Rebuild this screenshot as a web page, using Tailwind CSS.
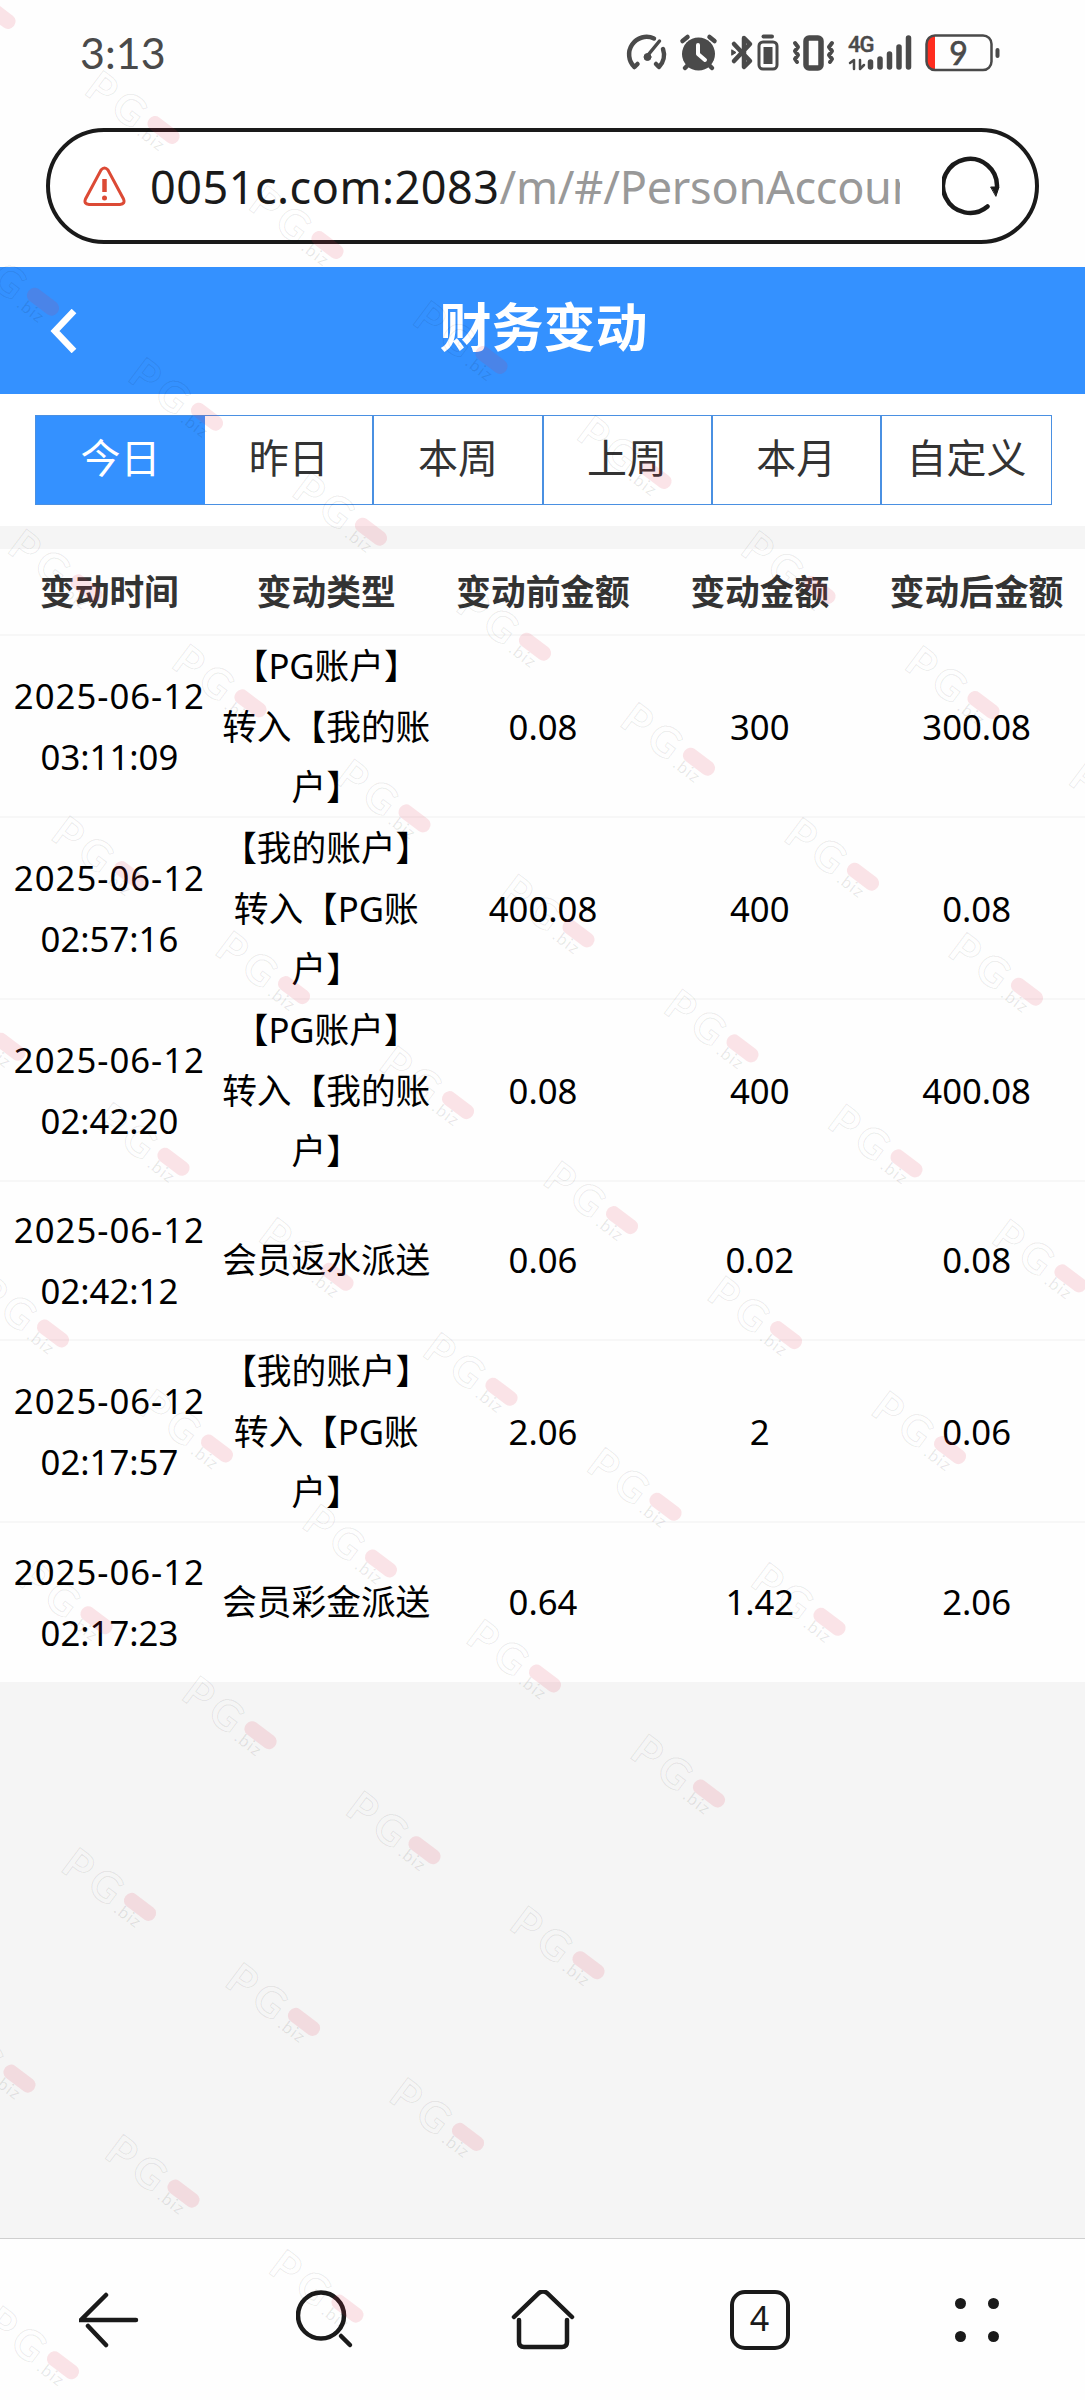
<!DOCTYPE html>
<html lang="zh-CN">
<head>
<meta charset="utf-8">
<title>财务变动</title>
<script src="https://cdn.jsdelivr.net/npm/@tailwindcss/browser@4"></script>
</head>
<body class="bg-[#f5f5f5]">
<div class="relative flex flex-col w-[1085px] h-[2400px] overflow-hidden bg-[#f5f5f5] font-['Noto_Sans','Noto_Sans_CJK_SC',sans-serif] text-black">

  <!-- status bar -->
  <div class="h-[108px] shrink-0 bg-[#fefefe] flex items-center justify-between pl-20 pr-[84px]">
    <span class="text-[43px] leading-none font-['Lato','Noto_Sans',sans-serif] text-[#4a4a4a] w-24 whitespace-nowrap pb-1">3:13</span>
    <svg class="w-[376px] h-[60px]" viewBox="625 24 376 60" fill="none" stroke="#4a4a4a" stroke-width="4.5" stroke-linecap="round" stroke-linejoin="round">
      <path d="M654 38.500A17.500 17.500 0 0 0 634.500 67l3-3M663 49a17.500 17.500 0 0 1-4 18l-3-3"/>
      <path d="M659.500 41L646 57.500" stroke-width="3.500"/><circle cx="647.500" cy="57" r="3.500" fill="#4a4a4a" stroke-width="1"/>
      <circle cx="698.500" cy="54" r="16.500" fill="#4a4a4a" stroke="none"/>
      <path d="M682.500 41l5-4M714.500 41l-5-4M687 66l-2 2M710 66l2 2" stroke-width="4.500"/>
      <path d="M698 45v9l7 6" stroke="#fefefe" stroke-width="4"/>
      <path d="M734 44l16 17-6 6V38l6 6-16 17" stroke-width="4.500"/><path d="M732 50l4 2.500-4 2.500z" stroke-width="1" fill="#4a4a4a"/>
      <rect x="759" y="42" width="18" height="27" rx="4" stroke-width="3"/><path d="M763.500 36.500h8.500" stroke-width="4"/><path d="M763.500 47h9v17h-9z" fill="#4a4a4a" stroke="none"/>
      <rect x="806" y="38" width="15" height="30" rx="3" stroke-width="5.500"/>
      <path d="M795 43l3 4-3 4 3 4-3 4 2 3M832 43l-3 4 3 4-3 4 3 4-2 3" stroke-width="4"/>
      <path d="M870.500 62v5M880 59v8M889.500 54v13M899 47v20M908.500 38v29" stroke-width="5.500"/>
      <path d="M850 63l4-3v9M860 60v9l4-4" stroke-width="2.500"/>
      <text x="848" y="52" font-size="22" font-weight="500" fill="#4a4a4a" stroke="#4a4a4a" stroke-width=".4" font-family="Roboto, sans-serif" letter-spacing="-1">4G</text>
      <path d="M935 36v33h-3a5 5 0 0 1-5-5V41a5 5 0 0 1 5-5z" fill="#ff2d1f" stroke="none"/>
      <rect x="926.500" y="35.500" width="65" height="34.500" rx="8.500" stroke-width="2.500"/>
      <path d="M997.500 50v6" stroke-width="4"/>
      <text x="958.500" y="64.500" text-anchor="middle" font-size="32" fill="#4a4a4a" stroke="#4a4a4a" stroke-width=".7" font-family="Lato, sans-serif">9</text>
    </svg>
  </div>

  <!-- address bar -->
  <div class="h-[159px] shrink-0 bg-[#fefefe] px-[46px] pt-5">
    <div class="h-[116px] rounded-full border-[4px] border-[#1a1a1a] bg-white flex items-center pl-[33px] pr-[35px]">
      <svg class="w-[43px] h-[41px] shrink-0" viewBox="0 0 43 41" fill="none" stroke="#dc4a35" stroke-width="3">
        <path d="M18 4q3.500-4 7 0l15.500 29q2 5-3.500 5.500H6q-5.500-.5-3.500-5.500z"/><path d="M21.500 13v13" stroke-width="4.500"/><circle cx="21.500" cy="32" r="2.500" fill="#dc4a35" stroke="none"/>
      </svg>
      <div class="ml-[24px] w-[750px] overflow-hidden whitespace-nowrap text-[45px] leading-[64px] pt-0.5 text-[#1a1a1a] tracking-[0.5px]"><span>0051c.com:2083</span><span class="text-[#999] tracking-[-0.25px]">/m/#/PersonAccount</span></div>
      <svg class="ml-auto w-[58px] h-[60px] shrink-0" viewBox="0 0 58 60" fill="none" stroke="#1a1a1a" stroke-width="4.500" stroke-linecap="round">
        <path d="M45.500 50.500A27 27 0 1 1 55 31"/><path d="M49 31h8l-3 9z" fill="#1a1a1a" stroke-width="1"/>
      </svg>
    </div>
  </div>

  <!-- page header -->
  <div class="relative h-[127px] shrink-0 bg-[#3491ff] flex items-center justify-center">
    <svg class="absolute left-[49px] top-[42px] w-[28px] h-[44px]" viewBox="0 0 28 44" fill="none" stroke="#fff" stroke-width="6.500"><path d="M25 2L6 22l19 20"/></svg>
    <h1 class="text-[52px] leading-none font-bold text-white pb-2 pl-0.5">财务变动</h1>
  </div>

  <!-- range tabs -->
  <div class="h-[132px] shrink-0 bg-white pl-[35px] pr-[33px] pt-[21px]">
    <div class="grid grid-cols-6 h-[90px] border border-[#4a90e2] text-[40px] text-[#333] text-center leading-[83px]">
      <div class="bg-[#3491ff] text-white">今日</div>
      <div class="border-r-2 border-[#4a90e2]">昨日</div>
      <div class="border-r-2 border-[#4a90e2]">本周</div>
      <div class="border-r-2 border-[#4a90e2]">上周</div>
      <div class="border-r-2 border-[#4a90e2]">本月</div>
      <div>自定义</div>
    </div>
  </div>

  <div class="h-[23px] shrink-0 bg-[#f5f5f5]"></div>

  <!-- records -->
  <div class="shrink-0 bg-[#fefefe] text-[34.700px] leading-[60.500px] text-center whitespace-nowrap">
    <div class="grid grid-cols-5 h-[87px] items-center border-b-2 border-[#f7f7f7] font-bold text-[#333] pl-px pt-px">
      <div>变动时间</div><div>变动类型</div><div>变动前金额</div><div>变动金额</div><div>变动后金额</div>
    </div>
    <div class="grid grid-cols-5 h-[182px] items-center border-b-2 border-[#f7f7f7] pl-px">
      <div><span class="tracking-[1px]">2025-06-12</span><br>03:11:09</div><div>【PG账户】<br>转入【我的账<br>户】</div><div>0.08</div><div>300</div><div>300.08</div>
    </div>
    <div class="grid grid-cols-5 h-[182px] items-center border-b-2 border-[#f7f7f7] pl-px">
      <div><span class="tracking-[1px]">2025-06-12</span><br>02:57:16</div><div>【我的账户】<br>转入【PG账<br>户】</div><div>400.08</div><div>400</div><div>0.08</div>
    </div>
    <div class="grid grid-cols-5 h-[182px] items-center border-b-2 border-[#f7f7f7] pl-px">
      <div><span class="tracking-[1px]">2025-06-12</span><br>02:42:20</div><div>【PG账户】<br>转入【我的账<br>户】</div><div>0.08</div><div>400</div><div>400.08</div>
    </div>
    <div class="grid grid-cols-5 h-[159px] items-center border-b-2 border-[#f7f7f7] pl-px">
      <div><span class="tracking-[1px]">2025-06-12</span><br>02:42:12</div><div>会员返水派送</div><div>0.06</div><div>0.02</div><div>0.08</div>
    </div>
    <div class="grid grid-cols-5 h-[182px] items-center border-b-2 border-[#f7f7f7] pl-px">
      <div><span class="tracking-[1px]">2025-06-12</span><br>02:17:57</div><div>【我的账户】<br>转入【PG账<br>户】</div><div>2.06</div><div>2</div><div>0.06</div>
    </div>
    <div class="grid grid-cols-5 h-[159px] items-center pl-px">
      <div><span class="tracking-[1px]">2025-06-12</span><br>02:17:23</div><div>会员彩金派送</div><div>0.64</div><div>1.42</div><div>2.06</div>
    </div>
  </div>

  <!-- browser toolbar -->
  <div class="mt-auto h-[162px] shrink-0 bg-[#fefefe] border-t border-[#cfcfcf] grid grid-cols-5 items-center justify-items-center">
    <svg class="w-[60px] h-[60px]" viewBox="0 0 60 60" fill="none" stroke="#1a1a1a" stroke-width="4.500" stroke-linecap="round"><path d="M57 30H2L27 5M9 36l18 19"/></svg>
    <svg class="w-[60px] h-[60px]" viewBox="0 0 60 60" fill="none" stroke="#1a1a1a" stroke-width="4.500" stroke-linecap="round"><circle cx="25" cy="25.500" r="23"/><path d="M45 46l9 9"/></svg>
    <svg class="w-[64px] h-[60px]" viewBox="0 0 64 60" fill="none" stroke="#1a1a1a" stroke-width="4.500" stroke-linecap="round"><path d="M3 27L28 3q4-3 8 0l25 24M8 30v22q0 5 5 5h38q5 0 5-5V30"/></svg>
    <div class="w-[60px] h-[60px] rounded-[15px] border-[4px] border-[#1a1a1a] flex items-center justify-center text-[34px] leading-none text-[#1a1a1a] pb-1">4</div>
    <div class="grid grid-cols-2 gap-[22px]">
      <i class="w-[11px] h-[11px] rounded-full bg-[#1a1a1a]"></i><i class="w-[11px] h-[11px] rounded-full bg-[#1a1a1a]"></i>
      <i class="w-[11px] h-[11px] rounded-full bg-[#1a1a1a]"></i><i class="w-[11px] h-[11px] rounded-full bg-[#1a1a1a]"></i>
    </div>
  </div>

  <!-- repeating watermark -->
  <svg class="absolute inset-0 w-[1085px] h-[2400px] pointer-events-none" viewBox="0 0 1085 2400">
    <defs>
      <g id="mark">
        <g transform="rotate(37)">
          <text x="-87" y="19" font-size="42" letter-spacing="6" font-family="Lato, sans-serif" font-weight="bold" fill="#000" fill-opacity=".015" stroke="#000" stroke-width="1.2" stroke-opacity=".07">PG</text>
          <rect x="-18" y="-7.500" width="36" height="15" rx="7" fill="#e0304c" fill-opacity=".13"/>
          <text x="-19" y="20" font-size="17" letter-spacing="1" font-family="Lato, sans-serif" fill="#000" fill-opacity=".09">.biz</text>
        </g>
      </g>
      <g id="line">
        <use href="#mark" x="-164" y="-115"/><use href="#mark"/><use href="#mark" x="164" y="115"/>
        <use href="#mark" x="328" y="230"/><use href="#mark" x="492" y="345"/><use href="#mark" x="656" y="460"/>
        <use href="#mark" x="820" y="575"/><use href="#mark" x="984" y="690"/><use href="#mark" x="1148" y="805"/>
      </g>
    </defs>
    <g transform="translate(163.500 130)">
      <use href="#line"/><use href="#line" x="-120.500" y="171.700"/><use href="#line" x="-241" y="343.400"/>
      <use href="#line" x="-361.500" y="515.100"/><use href="#line" x="-482" y="686.800"/><use href="#line" x="-602.500" y="858.500"/>
      <use href="#line" x="-723" y="1030.200"/><use href="#line" x="-843.500" y="1201.900"/><use href="#line" x="-964" y="1373.600"/>
      <use href="#line" x="-1084.500" y="1545.300"/>
    </g>
  </svg>
</div>
</body>
</html>
